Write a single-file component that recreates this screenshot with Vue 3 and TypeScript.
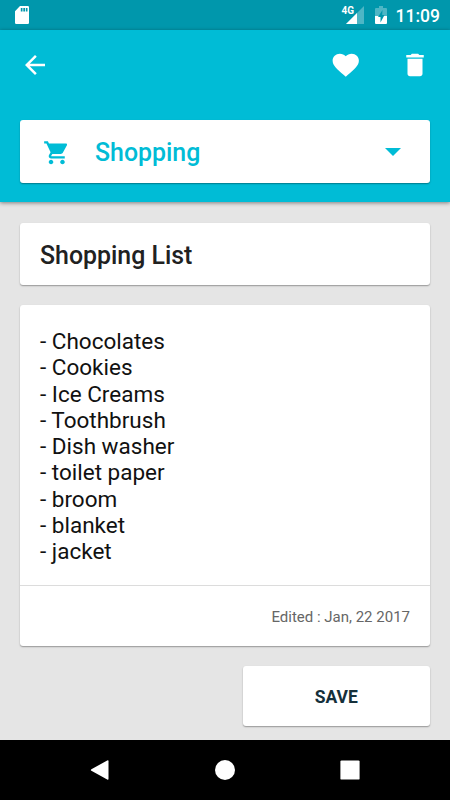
<script setup lang="ts">
import { ref } from 'vue'

const category = ref<string>('Shopping')
const title = ref<string>('Shopping List')
const items = ref<string[]>([
  'Chocolates',
  'Cookies',
  'Ice Creams',
  'Toothbrush',
  'Dish washer',
  'toilet paper',
  'broom',
  'blanket',
  'jacket',
])
const edited = ref<string>('Jan, 22 2017')
</script>

<template>
  <div class="screen">
    <div class="status-bar">
      <svg class="sd-card" viewBox="0 0 16 20">
        <path fill-rule="evenodd" d="M6 1h7.800q1.200 0 1.200 1.200v15.600q0 1.200-1.200 1.200H2.200q-1.200 0-1.200-1.200V6.200zM6.800 3v3.500h1.700V3zM9.300 3v3.500h1.700V3zM11.800 3v3.500h1.700V3z" />
      </svg>
      <div class="status-right">
        <span class="network">4G</span>
        <svg class="signal" viewBox="0 0 18 18">
          <path class="faint" d="M18 0v18H0z" />
          <path d="M11 7v11H0z" />
        </svg>
        <svg class="battery" viewBox="0 0 12 18">
          <path class="faint" d="M4 0h4v2h3q1 0 1 1v7H0V3q0-1 1-1h3z" />
          <path d="M0 10h12v7q0 1-1 1H1q-1 0-1-1z" />
          <path class="bolt" d="M7.500 4L3 11h2.500v5.500L9.500 9H7.200z" />
        </svg>
        <span class="clock">11:09</span>
      </div>
    </div>

    <header class="header">
      <div class="toolbar">
        <button class="icon-button" aria-label="Back">
          <svg viewBox="0 0 24 24"><path d="M20 11H7.830l5.590-5.590L12 4l-8 8 8 8 1.410-1.410L7.830 13H20v-2z" /></svg>
        </button>
        <div class="actions">
          <button class="icon-button" aria-label="Favorite">
            <svg class="heart" viewBox="0 0 24 24" preserveAspectRatio="none"><path d="M12 21.350l-1.450-1.320C5.400 15.360 2 12.280 2 8.500 2 5.420 4.420 3 7.500 3c1.740 0 3.410.81 4.500 2.090C13.090 3.810 14.760 3 16.500 3 19.580 3 22 5.420 22 8.500c0 3.780-3.400 6.860-8.550 11.540L12 21.350z" /></svg>
          </button>
          <button class="icon-button" aria-label="Delete">
            <svg viewBox="0 0 24 24"><path d="M6 19c0 1.100.9 2 2 2h8c1.100 0 2-.9 2-2V7H6v12zM19 4h-3.500l-1-1h-5l-1 1H5v2h14V4z" /></svg>
          </button>
        </div>
      </div>
      <div class="card category">
        <svg class="cart" viewBox="0 0 24 24">
          <path d="M7 18c-1.100 0-1.990.9-1.990 2S5.900 22 7 22s2-.9 2-2-.9-2-2-2zM1 2v2h2l3.600 7.590-1.350 2.450c-.16.280-.25.610-.25.960 0 1.100.9 2 2 2h12v-2H7.420c-.14 0-.25-.11-.25-.25l.03-.12.9-1.630h7.450c.75 0 1.410-.41 1.750-1.030l3.580-6.490c.08-.14.12-.31.12-.480 0-.55-.45-1-1-1H5.210l-.94-2H1zm16 16c-1.100 0-1.990.9-1.990 2s.89 2 1.990 2 2-.9 2-2-.9-2-2-2z" />
        </svg>
        <span class="category-name">{{ category }}</span>
        <svg class="caret" viewBox="0 0 16 8"><path d="M0 0h16L8 8z" /></svg>
      </div>
    </header>

    <main class="content">
      <div class="card title">{{ title }}</div>
      <div class="card note">
        <div class="note-body">
          <div v-for="item in items" :key="item" class="line">- {{ item }}</div>
        </div>
        <div class="note-footer">Edited : {{ edited }}</div>
      </div>
      <button class="card save">SAVE</button>
    </main>

    <nav class="nav-bar">
      <svg viewBox="0 0 20 20"><path d="M17.200.5q1.300-.7 1.300 .7v17.600q0 1.400-1.300.7L1.400 10.800q-1.200-.8 0-1.600z" /></svg>
      <svg viewBox="0 0 20 20"><circle cx="10" cy="10" r="10" /></svg>
      <svg viewBox="0 0 20 20"><rect x=".4" y=".4" width="19.200" height="19.200" rx="1.200" /></svg>
    </nav>
  </div>
</template>

<style>
body {
  margin: 0;
}
</style>

<style scoped>
.screen {
  width: 450px;
  height: 800px;
  display: flex;
  flex-direction: column;
  overflow: hidden;
  background: #e5e5e5;
  font-family: Roboto, sans-serif;
}
svg {
  display: block;
  fill: currentColor;
}
button {
  border: 0;
  padding: 0;
  font-family: inherit;
}
.status-bar {
  height: 30px;
  flex: none;
  box-sizing: border-box;
  padding: 0 10px 0 14px;
  display: flex;
  align-items: center;
  justify-content: space-between;
  background: #0097ac;
  color: #fff;
}
.sd-card {
  width: 16px;
  height: 20px;
}
.status-right {
  display: flex;
  align-items: center;
  height: 30px;
}
.network {
  font-size: 10px;
  font-weight: 700;
  line-height: 10px;
  margin-bottom: 9px;
  margin-right: -8px;
}
.signal {
  width: 18px;
  height: 18px;
}
.battery {
  width: 12px;
  height: 18px;
  margin: 0 9px 0 10.500px;
}
.faint {
  opacity: 0.3;
}
.bolt {
  fill: #0097ac;
}
.clock {
  font-size: 17.500px;
  font-weight: 500;
  line-height: 30px;
  padding-top: 2px;
}
.header {
  height: 172px;
  flex: none;
  box-sizing: border-box;
  padding: 20px 20px 0;
  background: #00bcd6;
  box-shadow: 0 1px 4px rgba(0, 0, 0, 0.45);
}
.toolbar {
  display: flex;
  justify-content: space-between;
  height: 70px;
}
.actions {
  display: flex;
  gap: 40px;
}
.icon-button {
  width: 30px;
  height: 30px;
  color: #fff;
  background: none;
}
.heart {
  width: 31.500px;
  height: 30px;
}
.card {
  box-sizing: border-box;
  background: #fff;
  border-radius: 3px;
  box-shadow: 0 1px 1.500px rgba(0, 0, 0, 0.35);
}
.category {
  height: 62.500px;
  display: flex;
  align-items: center;
  padding: 0 29.500px 0 23px;
  color: #00bcd6;
}
.cart {
  width: 27.500px;
  height: 27.500px;
  margin: 3px 24.500px 0 0;
}
.category-name {
  flex: 1;
  font-size: 24.900px;
  font-weight: 500;
  line-height: 30px;
  padding-top: 4px;
}
.caret {
  width: 16px;
  height: 8px;
  margin-top: 1.500px;
}
.content {
  flex: 1;
  display: flex;
  flex-direction: column;
  gap: 20px;
  padding: 21px 20px 0;
}
.title {
  height: 62px;
  padding: 2px 20px 0;
  font-size: 24.900px;
  font-weight: 500;
  line-height: 62px;
  color: #212121;
}
.note {
  height: 341px;
  display: flex;
  flex-direction: column;
}
.note-body {
  flex: 1;
  padding: 23px 20px 0;
  font-size: 22.500px;
  color: #111;
}
.line {
  line-height: 26.250px;
}
.note-footer {
  height: 61px;
  box-sizing: border-box;
  padding: 1px 20px 0;
  border-top: 1px solid #dcdcdc;
  text-align: right;
  font-size: 15px;
  line-height: 60px;
  color: #666;
}
.save {
  width: 187.500px;
  height: 60px;
  align-self: flex-end;
  padding-top: 2px;
  font-size: 17.500px;
  font-weight: 700;
  line-height: 58px;
  color: #15303b;
}
.nav-bar {
  height: 60px;
  flex: none;
  display: flex;
  align-items: center;
  justify-content: center;
  gap: 105px;
  background: #000;
  color: #fff;
}
.nav-bar svg {
  width: 20px;
  height: 20px;
}
</style>
